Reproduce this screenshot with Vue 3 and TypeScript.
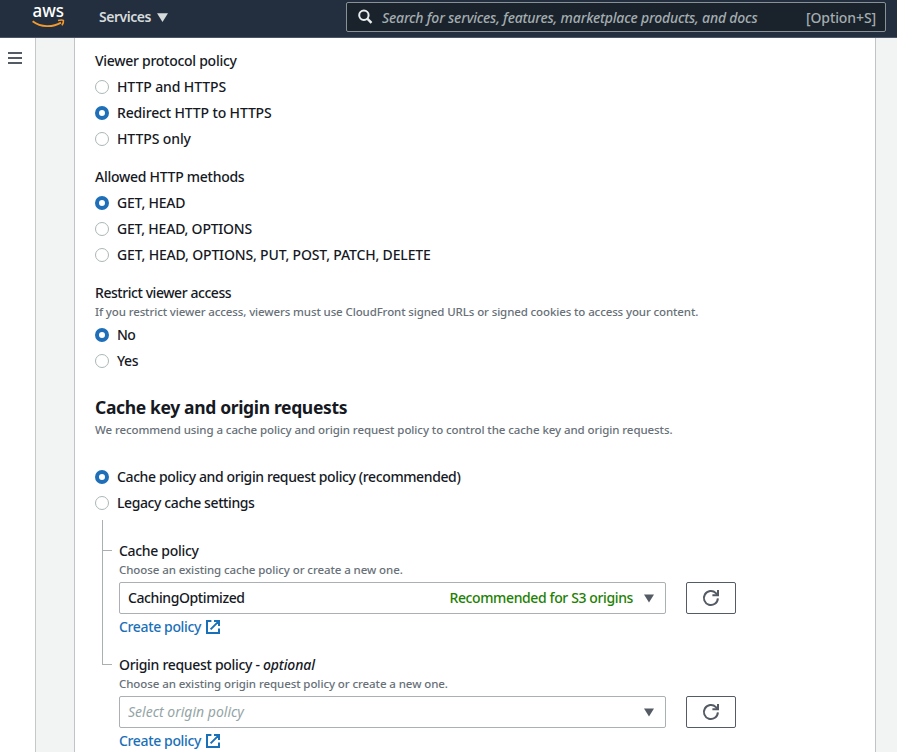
<script setup lang="ts">
import { ref } from 'vue'

interface Option {
  text: string
  tracking: number
}
interface Group {
  id: string
  label: string
  tracking: number
  hint?: string
  options: Option[]
  selected: number
}
interface Policy {
  id: string
  label: string
  optional?: boolean
  hint: string
  value?: string
  badge?: string
}

const groups = ref<Group[]>([
  {
    id: 'protocol',
    label: 'Viewer protocol policy',
    tracking: -0.28,
    options: [
      { text: 'HTTP and HTTPS', tracking: -0.1 },
      { text: 'Redirect HTTP to HTTPS', tracking: -0.15 },
      { text: 'HTTPS only', tracking: -0.1 },
    ],
    selected: 1,
  },
  {
    id: 'methods',
    label: 'Allowed HTTP methods',
    tracking: -0.27,
    options: [
      { text: 'GET, HEAD', tracking: -0.2 },
      { text: 'GET, HEAD, OPTIONS', tracking: -0.22 },
      { text: 'GET, HEAD, OPTIONS, PUT, POST, PATCH, DELETE', tracking: -0.165 },
    ],
    selected: 0,
  },
  {
    id: 'access',
    label: 'Restrict viewer access',
    tracking: -0.44,
    hint: 'If you restrict viewer access, viewers must use CloudFront signed URLs or signed cookies to access your content.',
    options: [
      { text: 'No', tracking: -0.5 },
      { text: 'Yes', tracking: -0.4 },
    ],
    selected: 0,
  },
])

const cacheModes: Option[] = [
  { text: 'Cache policy and origin request policy (recommended)', tracking: -0.385 },
  { text: 'Legacy cache settings', tracking: -0.4 },
]
const cacheMode = ref(0)

const policies: Policy[] = [
  {
    id: 'cache',
    label: 'Cache policy',
    hint: 'Choose an existing cache policy or create a new one.',
    value: 'CachingOptimized',
    badge: 'Recommended for S3 origins',
  },
  {
    id: 'origin',
    label: 'Origin request policy',
    optional: true,
    hint: 'Choose an existing origin request policy or create a new one.',
  },
]

const spacing = (px: number) => ({ letterSpacing: `${px}px` })
</script>

<template>
  <div class="console">
    <header class="topbar">
      <svg class="logo" viewBox="0 0 36 30" width="36" height="30" aria-label="aws">
        <text class="logo-text" x="1.5" y="15.2" textLength="31.5" lengthAdjust="spacingAndGlyphs">aws</text>
        <path class="smile" d="M1.6 19.2C10 25.4 21.5 25.6 30 20.6" />
        <path class="smile tip" d="M27 18.5Q31 17.6 32.4 18.4Q32.8 20.2 31 23.4" />
      </svg>
      <button class="services" type="button">
        <span>Services</span>
        <svg width="11" height="9" viewBox="0 0 11 9"><path d="M0 .2H11L5.5 9Z" fill="#d5dbdb" /></svg>
      </button>
      <div class="search">
        <svg width="16" height="16" viewBox="0 0 16 16" fill="none" stroke="#eaeded" stroke-width="2">
          <circle cx="5.9" cy="6.2" r="4.7" />
          <path d="M9.3 9.6L13.5 13.8" stroke-width="2.4" />
        </svg>
        <span class="search-text">Search for services, features, marketplace products, and docs</span>
        <span class="shortcut">[Option+S]</span>
      </div>
    </header>

    <div class="body">
      <nav class="rail">
        <svg width="14" height="12" viewBox="0 0 14 12"><path d="M0 1H14M0 6H14M0 11H14" stroke="#545b64" stroke-width="2" /></svg>
      </nav>
      <main class="card">
        <section v-for="g in groups" :key="g.id" class="group">
          <div class="label" :style="spacing(g.tracking)">{{ g.label }}</div>
          <div v-if="g.hint" class="hint wide">{{ g.hint }}</div>
          <div class="options">
            <div v-for="(o, i) in g.options" :key="o.text" class="option" @click="g.selected = i">
              <span class="radio" :class="{ on: i === g.selected }"></span>
              <span :style="spacing(o.tracking)">{{ o.text }}</span>
            </div>
          </div>
        </section>

        <h2>Cache key and origin requests</h2>
        <div class="hint">We recommend using a cache policy and origin request policy to control the cache key and origin requests.</div>

        <div class="options modes">
          <div v-for="(o, i) in cacheModes" :key="o.text" class="option" @click="cacheMode = i">
            <span class="radio" :class="{ on: i === cacheMode }"></span>
            <span :style="spacing(o.tracking)">{{ o.text }}</span>
          </div>
        </div>

        <div class="tree">
          <div v-for="p in policies" :key="p.id" class="node">
            <div class="branch"><i></i></div>
            <div class="policy">
              <div class="label">{{ p.label }}<template v-if="p.optional"> - <em>optional</em></template></div>
              <div class="hint">{{ p.hint }}</div>
              <div class="control">
                <div class="select">
                  <span v-if="p.value" class="value">{{ p.value }}</span>
                  <span v-else class="placeholder">Select origin policy</span>
                  <span class="badge">{{ p.badge }}</span>
                  <svg width="10" height="9" viewBox="0 0 10 9"><path d="M0 .5H10L5 8.5Z" fill="#545b64" /></svg>
                </div>
                <button class="refresh" type="button" aria-label="Refresh">
                  <svg width="18" height="18" viewBox="0 0 18 18" fill="none" stroke="#545b64" stroke-width="2">
                    <path d="M15.9 9.4A7 7 0 1 1 13.9 4.1L15.4 5.8" />
                    <path d="M16 1V6.2H10.4" />
                  </svg>
                </button>
              </div>
              <a class="link">
                <span>Create policy</span>
                <svg width="14" height="14" viewBox="0 0 14 14" fill="none" stroke="#1a70b8" stroke-width="2">
                  <path d="M5.4 1H1V13H13V8.6M8 1H13V6M12.6 1.4L4.6 9.4" />
                </svg>
              </a>
            </div>
          </div>
        </div>
      </main>
    </div>
  </div>
</template>

<style>
body {
  overflow: hidden;
}
</style>

<style scoped>
.console {
  height: 752px;
  overflow: hidden;
  display: flex;
  flex-direction: column;
  font: 500 14px/22px "Noto Sans", "Open Sans", sans-serif;
  color: #16191f;
  background: #f2f3f3;
}
button {
  font: inherit;
  border: 0;
  padding: 0;
  background: none;
}
svg {
  display: block;
  flex: none;
}
.topbar {
  flex: none;
  box-sizing: border-box;
  height: 38px;
  padding: 2px 11px 5px 31px;
  display: flex;
  align-items: center;
  background: #232f3e;
  border-bottom: 1px solid #4a5462;
}
.logo {
  overflow: visible;
}
.logo-text {
  font: 500 18px/20px "Noto Sans", sans-serif;
  fill: #fff;
}
.smile {
  fill: none;
  stroke: #f29a2e;
  stroke-width: 1.9;
}
.tip {
  stroke-width: 1.6;
}
.services {
  margin-left: 32px;
  display: flex;
  align-items: center;
  gap: 6px;
  color: #d5dbdb;
  font-weight: 600;
  letter-spacing: -0.47px;
}
.search {
  margin-left: auto;
  box-sizing: border-box;
  width: 540px;
  height: 30px;
  padding: 0 9px 0 11px;
  display: flex;
  align-items: center;
  line-height: 24px;
  border: 1px solid #879196;
  border-radius: 2px;
  background: #1a222b;
  color: #a3adb0;
}
.search-text {
  margin-left: 8px;
  padding-top: 2px;
  flex: 1;
  font-style: italic;
  letter-spacing: -0.185px;
}
.shortcut {
  padding-top: 2px;
  letter-spacing: -0.1px;
}
.body {
  flex: 1;
  min-height: 0;
  display: flex;
}
.rail {
  flex: none;
  box-sizing: border-box;
  width: 36px;
  padding: 14px 0 0 8px;
  background: #fff;
  border-right: 1px solid #c3c8c8;
}
.card {
  flex: none;
  box-sizing: border-box;
  width: 802px;
  margin-left: 38px;
  padding: 12px 20px 0;
  background: #fff;
  border-left: 1px solid #c0c4c4;
  border-right: 1px solid #c0c4c4;
}
.group {
  margin-bottom: 16px;
}
.label {
  height: 22px;
  white-space: nowrap;
}
.hint {
  height: 16px;
  font-size: 11.5px;
  line-height: 16px;
  letter-spacing: -0.085px;
  color: #687078;
  white-space: nowrap;
}
.hint.wide {
  letter-spacing: -0.117px;
}
.options {
  display: flex;
  flex-direction: column;
  gap: 4px;
  padding-top: 4px;
}
.option {
  display: flex;
  align-items: center;
  gap: 8px;
  height: 22px;
  white-space: nowrap;
}
.radio {
  box-sizing: border-box;
  width: 14px;
  height: 14px;
  border: 1px solid #aab7b8;
  border-radius: 50%;
  background: #fff;
}
.radio.on {
  border: 4.5px solid #1f6fb8;
}
h2 {
  margin: 24px 0 0;
  font-size: 17.5px;
  line-height: 22px;
  font-weight: 700;
  letter-spacing: -0.35px;
}
h2 + .hint {
  margin-top: 4px;
}
.modes {
  padding-top: 28px;
}
.tree {
  padding: 6px 0 0 7px;
}
.node {
  display: flex;
}
.branch {
  box-sizing: border-box;
  width: 10px;
  margin-right: 7px;
  border-left: 1px solid #a8b0b2;
}
.branch i {
  display: block;
  box-sizing: border-box;
  height: 31px;
  border-bottom: 1px solid #a8b0b2;
}
.node:last-child .branch {
  height: 27px;
}
.node:last-child .branch i {
  height: 27px;
}
.policy {
  padding-top: 20px;
}
.node + .node .policy {
  padding-top: 16px;
}
.policy .label {
  letter-spacing: -0.31px;
}
.policy .label em {
  letter-spacing: -0.12px;
}
.control {
  display: flex;
  gap: 20px;
  margin-top: 4px;
}
.select {
  box-sizing: border-box;
  width: 547px;
  height: 32px;
  padding: 0 11px 0 8px;
  display: flex;
  align-items: center;
  border: 1px solid #aab0b3;
  border-radius: 2px;
}
.value {
  letter-spacing: -0.4px;
}
.placeholder {
  font-style: italic;
  font-weight: 400;
  color: #95a5a6;
}
.badge {
  margin-left: auto;
  margin-right: 11px;
  color: #1d8102;
  letter-spacing: -0.38px;
}
.refresh {
  box-sizing: border-box;
  width: 50px;
  height: 32px;
  display: flex;
  align-items: center;
  justify-content: center;
  border: 1px solid #545b64;
  border-radius: 2px;
}
.link {
  display: flex;
  align-items: center;
  gap: 5px;
  height: 22px;
  margin-top: 2px;
  color: #1a70b8;
  letter-spacing: -0.36px;
}
</style>
